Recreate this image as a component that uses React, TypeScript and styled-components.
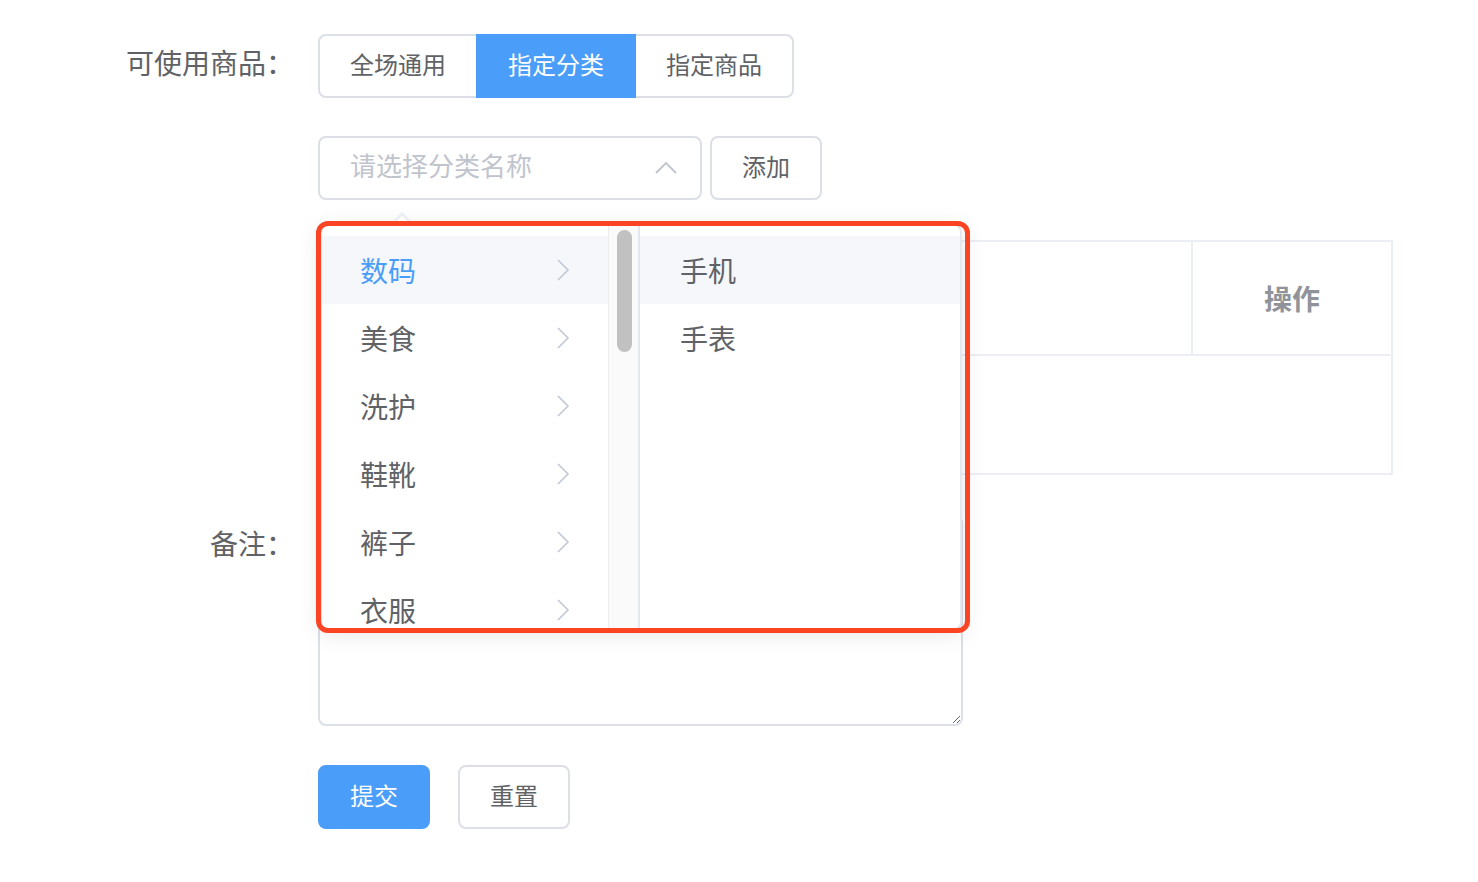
import React from "react";
import styled, { createGlobalStyle } from "styled-components";

const BLUE = "#4a9df8";

const GlobalStyle = createGlobalStyle`
  html, body { margin: 0; padding: 0; background: #fff; }
  body {
    font-family: "Noto Sans CJK SC", "Noto Sans", sans-serif;
    color: #606266;
  }
  * { box-sizing: border-box; }
`;

const Form = styled.div`
  display: flex;
  flex-direction: column;
  padding-top: 34px;
`;

const FormItem = styled.div<{ $gap?: number }>`
  display: flex;
  align-items: flex-start;
  margin-bottom: ${(p) => p.$gap ?? 40}px;
`;

const Label = styled.div`
  flex: none;
  width: 318px;
  padding-right: 24px;
  text-align: right;
  font-size: 28px;
  line-height: 56px;
  height: 64px;
  color: #606266;
`;

const Content = styled.div`
  display: flex;
  align-items: flex-start;
  position: relative;
`;

const RadioGroup = styled.div`
  display: inline-flex;
`;

const RadioBtn = styled.div<{ $active?: boolean; $pos: "first" | "mid" | "last" }>`
  position: relative;
  z-index: ${(p) => (p.$active ? 1 : 0)};
  height: 64px;
  padding: 0 30px 6px;
  display: flex;
  align-items: center;
  font-size: 24px;
  border: 2px solid ${(p) => (p.$active ? BLUE : "#dcdfe6")};
  background: ${(p) => (p.$active ? BLUE : "#fff")};
  color: ${(p) => (p.$active ? "#fff" : "#606266")};
  margin-left: ${(p) => (p.$pos === "first" ? "0" : "-2px")};
  border-radius: ${(p) =>
    p.$pos === "first" ? "8px 0 0 8px" : p.$pos === "last" ? "0 8px 8px 0" : "0"};
`;

const Select = styled.div`
  width: 384px;
  height: 64px;
  border: 2px solid #dcdfe6;
  border-radius: 8px;
  display: flex;
  align-items: center;
  justify-content: space-between;
  padding: 0 23px 0 30px;
  font-size: 26px;
  color: #c0c4cc;
`;

const Placeholder = styled.span`
  padding-bottom: 8px;
`;

const Button = styled.div<{ $primary?: boolean }>`
  width: 112px;
  height: 64px;
  border-radius: 8px;
  display: flex;
  align-items: center;
  justify-content: center;
  padding-bottom: 6px;
  font-size: 24px;
  border: 2px solid ${(p) => (p.$primary ? BLUE : "#dcdfe6")};
  background: ${(p) => (p.$primary ? BLUE : "#fff")};
  color: ${(p) => (p.$primary ? "#fff" : "#606266")};
`;

const AddButton = styled(Button)`
  margin-left: 8px;
`;

const ButtonRow = styled.div`
  display: flex;
  gap: 28px;
`;

const Popper = styled.div`
  position: absolute;
  left: 2px;
  top: 88px;
  width: 642px;
  height: 406px;
  background: #fff;
  border: 2px solid #e4e7ed;
  border-radius: 8px;
  box-shadow: 0 4px 24px rgba(0, 0, 0, 0.1);
  display: flex;
  z-index: 10;

  &::before {
    content: "";
    position: absolute;
    left: 68px;
    top: -14px;
    border: 12px solid transparent;
    border-top: 0;
    border-bottom: 12px solid #ebeef5;
  }
  &::after {
    content: "";
    position: absolute;
    left: 70px;
    top: -10px;
    border: 10px solid transparent;
    border-top: 0;
    border-bottom: 10px solid #fff;
  }
`;

const Annotation = styled.div`
  position: absolute;
  left: -2px;
  top: 85px;
  width: 654px;
  height: 412px;
  border: 5px solid #fb4423;
  border-radius: 12px;
  z-index: 11;
  pointer-events: none;
`;

const Menu = styled.div<{ $withBar?: boolean }>`
  display: flex;
  width: ${(p) => (p.$withBar ? "318px" : "auto")};
  flex: ${(p) => (p.$withBar ? "none" : "1")};
  border-right: ${(p) => (p.$withBar ? "2px solid #e4e7ed" : "none")};
  overflow: hidden;
  border-radius: ${(p) => (p.$withBar ? "6px 0 0 6px" : "0 6px 6px 0")};
`;

const MenuList = styled.div`
  flex: 1;
  padding-top: 10px;
  overflow: hidden;
`;

const MenuItem = styled.div<{ $active?: boolean; $hover?: boolean }>`
  height: 68px;
  padding: 0 38px 0 38px;
  display: flex;
  align-items: center;
  justify-content: space-between;
  font-size: 28px;
  color: ${(p) => (p.$active ? BLUE : "#606266")};
  background: ${(p) => (p.$active || p.$hover ? "#f5f7fa" : "transparent")};
`;

const SubItem = styled(MenuItem)`
  padding-left: 40px;
`;

const Gutter = styled.div`
  width: 30px;
  flex: none;
  background: #fafafa;
  border-left: 1px solid #ececec;
  padding: 4px 0 0 8px;
`;

const Thumb = styled.div`
  width: 15px;
  height: 122px;
  border-radius: 8px;
  background: #c1c1c1;
`;

const Table = styled.div`
  width: 1075px;
  border: 2px solid #ebeef5;
`;

const TableHead = styled.div`
  display: grid;
  grid-template-columns: 1fr 198px;
  border-bottom: 2px solid #ebeef5;
`;

const HeadCell = styled.div<{ $last?: boolean }>`
  height: 112px;
  display: flex;
  align-items: center;
  justify-content: center;
  font-size: 28px;
  font-weight: 700;
  color: #909399;
  border-right: ${(p) => (p.$last ? "none" : "2px solid #ebeef5")};
`;

const TableEmpty = styled.div`
  height: 117px;
  display: flex;
  align-items: center;
  justify-content: center;
  font-size: 26px;
  color: #909399;
`;

const TextArea = styled.textarea`
  width: 645px;
  height: 211px;
  border: 2px solid #dcdfe6;
  border-radius: 8px;
  resize: vertical;
  font-family: inherit;
  font-size: 26px;
  padding: 10px 30px;
  color: #606266;
  outline: none;
  display: block;
`;

const Chevron = ({ dir }: { dir: "up" | "right" }) =>
  dir === "right" ? (
    <svg width="14" height="24" viewBox="0 0 14 24" fill="none">
      <polyline points="2,2 12,12 2,22" stroke="#c0c8d6" strokeWidth="1.6" />
    </svg>
  ) : (
    <svg width="22" height="12" viewBox="0 0 22 12" fill="none">
      <polyline points="1,11 11,1 21,11" stroke="#c0c4cc" strokeWidth="1.8" />
    </svg>
  );

const categories = ["数码", "美食", "洗护", "鞋靴", "裤子", "衣服", "母婴"];
const subs = ["手机", "手表"];

export default function App() {
  return (
    <>
      <GlobalStyle />
      <Form>
        <FormItem $gap={38}>
          <Label>可使用商品：</Label>
          <Content>
            <RadioGroup>
              <RadioBtn $pos="first">全场通用</RadioBtn>
              <RadioBtn $pos="mid" $active>
                指定分类
              </RadioBtn>
              <RadioBtn $pos="last">指定商品</RadioBtn>
            </RadioGroup>
          </Content>
        </FormItem>

        <FormItem $gap={40}>
          <Label />
          <Content>
            <Select>
              <Placeholder>请选择分类名称</Placeholder>
              <Chevron dir="up" />
            </Select>
            <AddButton>添加</AddButton>
            <Popper>
              <Menu $withBar>
                <MenuList>
                  {categories.map((c, i) => (
                    <MenuItem key={c} $active={i === 0}>
                      <span>{c}</span>
                      <Chevron dir="right" />
                    </MenuItem>
                  ))}
                </MenuList>
                <Gutter>
                  <Thumb />
                </Gutter>
              </Menu>
              <Menu>
                <MenuList>
                  {subs.map((s, i) => (
                    <SubItem key={s} $hover={i === 0}>
                      <span>{s}</span>
                    </SubItem>
                  ))}
                </MenuList>
              </Menu>
            </Popper>
            <Annotation />
          </Content>
        </FormItem>

        <FormItem $gap={40}>
          <Label />
          <Content>
            <Table>
              <TableHead>
                <HeadCell>分类名称</HeadCell>
                <HeadCell $last>操作</HeadCell>
              </TableHead>
              <TableEmpty>暂无数据</TableEmpty>
            </Table>
          </Content>
        </FormItem>

        <FormItem $gap={39}>
          <Label>备注：</Label>
          <Content>
            <TextArea />
          </Content>
        </FormItem>

        <FormItem $gap={0}>
          <Label />
          <Content>
            <ButtonRow>
              <Button $primary>提交</Button>
              <Button>重置</Button>
            </ButtonRow>
          </Content>
        </FormItem>
      </Form>
    </>
  );
}
